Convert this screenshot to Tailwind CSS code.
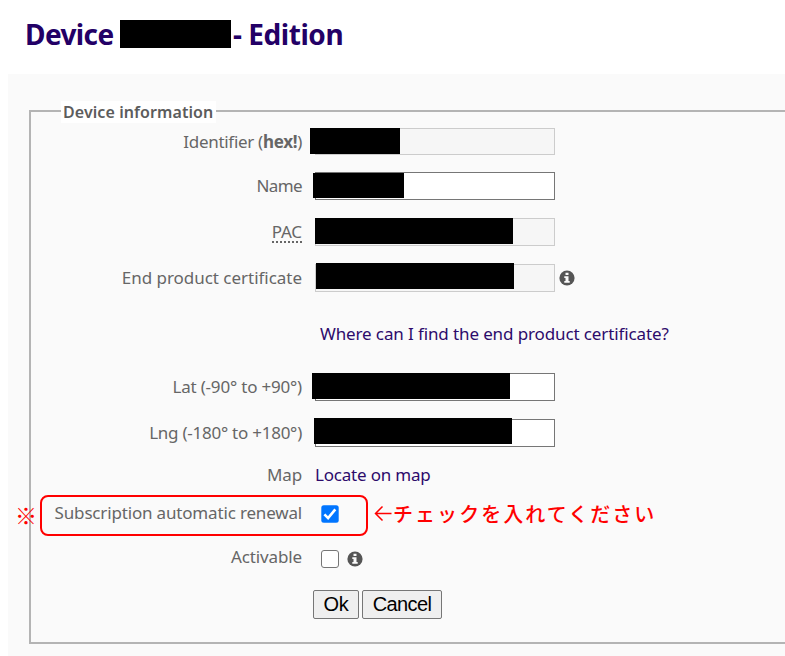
<!DOCTYPE html>
<html lang="ja">
<head>
<meta charset="utf-8">
<title>Device - Edition</title>
<script src="https://cdn.jsdelivr.net/npm/@tailwindcss/browser@4"></script>
</head>
<body class="w-[785px] h-[656px] overflow-hidden bg-white font-['Noto_Sans','Noto_Sans_CJK_JP',sans-serif] text-[17px] leading-6 tracking-[-0.12px] text-[#666]">
<svg class="hidden"><symbol id="info" viewBox="0 0 16 16"><circle cx="8" cy="8" r="7.6" fill="#555"/><path d="M6.5 2.7h3v2.2h-3zM5.3 6.2h4.2v4.7h1.2v1.8H5.3v-1.8h1.2V8H5.3z" fill="#fafafa"/></symbol></svg>
<header class="flex h-[74px] items-center pl-[25px] pb-[6px] text-[28px] font-bold text-[#230066]">
  <h1 class="flex items-center whitespace-nowrap"><span class="w-[95px] tracking-[-0.6px]">Device</span><span class="h-7 w-[111px] bg-black"></span><span class="ml-[2px] tracking-[-0.45px]">- Edition</span></h1>
</header>
<main class="ml-2 h-[582px] bg-[#fafafa] pl-[21px] pt-[36px]">
  <section class="relative h-[534px] w-[780px] border-2 border-[#b4b4b4] pt-[7px]">
    <h2 class="absolute left-[30px] top-[-11px] h-[22px] bg-white px-[2px] text-[16px] font-semibold leading-[22px] whitespace-nowrap text-[#5c5c5c]"><span class="block w-[151px] tracking-[0.08px]">Device information</span></h2>
    <div class="-ml-px">

    <div class="flex h-11 items-center"><div class="w-[272px] pt-px text-right tracking-[-0.3px]">Identifier (<b>hex!</b>)</div>
      <div class="relative ml-[13px] h-[27px] w-[240px] border border-[#ccc] bg-[#f6f6f6]"><div class="absolute left-[-6px] top-[-1px] h-[26px] w-[90px] bg-black"></div></div></div>

    <div class="flex h-[46px] items-center"><div class="w-[272px] text-right tracking-[-0.6px]">Name</div>
      <div class="relative ml-[13px] h-[28px] w-[240px] border border-[#767676] bg-white"><div class="absolute left-[-3px] top-0 h-[25px] w-[91px] bg-black"></div></div></div>

    <div class="flex h-[46px] items-center"><div class="w-[272px] text-right"><abbr class="inline-block border-b-2 border-dotted border-[#666] leading-[19px] no-underline">PAC</abbr></div>
      <div class="relative ml-[13px] h-[28px] w-[240px] border border-[#ccc] bg-[#f6f6f6]"><div class="absolute left-[-1px] top-[-1px] h-[26px] w-[198px] bg-black"></div></div></div>

    <div class="flex h-[46px] items-center"><div class="w-[272px] text-right tracking-[-0.03px]">End product certificate</div>
      <div class="relative ml-[13px] h-[28px] w-[240px] border border-[#ccc] bg-[#f6f6f6]"><div class="absolute left-0 top-[-2px] h-[26px] w-[198px] bg-black"></div></div>
      <svg class="ml-[3.5px] size-4"><use href="#info"/></svg></div>

    <div class="flex h-[66px] items-center pl-[290px] text-[#2d0b6b]"><a>Where can I find the end product certificate?</a></div>

    <div class="flex h-10 items-center"><div class="w-[272px] text-right tracking-[-0.2px]">Lat (-90° to +90°)</div>
      <div class="relative ml-[13px] h-[28px] w-[240px] border border-[#767676] bg-white"><div class="absolute left-[-4px] top-[-1px] h-[26px] w-[198px] bg-black"></div></div></div>

    <div class="flex h-[52px] items-center"><div class="w-[272px] text-right tracking-[-0.25px]">Lng (-180° to +180°)</div>
      <div class="relative ml-[13px] h-[28px] w-[240px] border border-[#767676] bg-white"><div class="absolute left-[-2px] top-[-2px] h-[26px] w-[198px] bg-black"></div></div></div>

    <div class="flex h-8 items-center"><div class="w-[272px] text-right">Map</div><a class="ml-[13px] tracking-[-0.2px] text-[#2d0b6b]">Locate on map</a></div>

    <div class="relative flex h-11 items-center"><div class="w-[272px] pb-px text-right tracking-[-0.17px]">Subscription automatic renewal</div>
      <svg class="ml-[19px] mt-[2px] size-[18px]" viewBox="0 0 18 18"><rect x=".3" y=".3" width="17.400" height="17.400" rx="2.500" fill="#0075ff"/><path d="M3.400 9.300l3.700 3.800 7.200-8.700" fill="none" stroke="#fff" stroke-width="2.600"/></svg>
      <div class="absolute left-[10px] top-[4px] h-[41px] w-[328px] rounded-[8px] border-2 border-[#f00]"></div>
      <span class="absolute left-[-15px] top-[11px] font-['Noto_Sans_CJK_JP'] text-[22px] font-bold tracking-normal text-[#f00]">※</span>
      <svg class="ml-[35px] h-[18px] w-[18px]" viewBox="0 0 18 18"><path d="M17.500 9.500H1.500M8.500 2.500L1.500 9.500l7 7" fill="none" stroke="#f00" stroke-width="1.500"/></svg>
      <span class="ml-[1px] whitespace-nowrap pt-px font-['Noto_Sans_CJK_JP'] text-[20px] font-medium tracking-[2.05px] text-[#f00]">チェックを入れてください</span></div>

    <div class="flex h-[46px] items-center"><div class="w-[272px] pb-[2px] text-right">Activable</div>
      <div class="ml-[19px] mt-[2px] size-[18px] rounded-[3px] border-[1.5px] border-[#767676] bg-white"></div><svg class="ml-[8px] mt-px size-4"><use href="#info"/></svg></div>

    <div class="flex h-[46px] items-center gap-[3px] pl-[283px] font-['Liberation_Sans'] text-[20px] text-black">
      <button class="h-[29px] w-[46px] rounded-[2px] border-[1.5px] border-[#767676] bg-[#efefef] leading-[24px] tracking-[-0.2px]">Ok</button><button class="h-[29px] w-[80px] rounded-[2px] border-[1.5px] border-[#767676] bg-[#efefef] leading-[24px] tracking-[-0.6px]">Cancel</button></div>
    </div>
  </section>
</main>
</body>
</html>
